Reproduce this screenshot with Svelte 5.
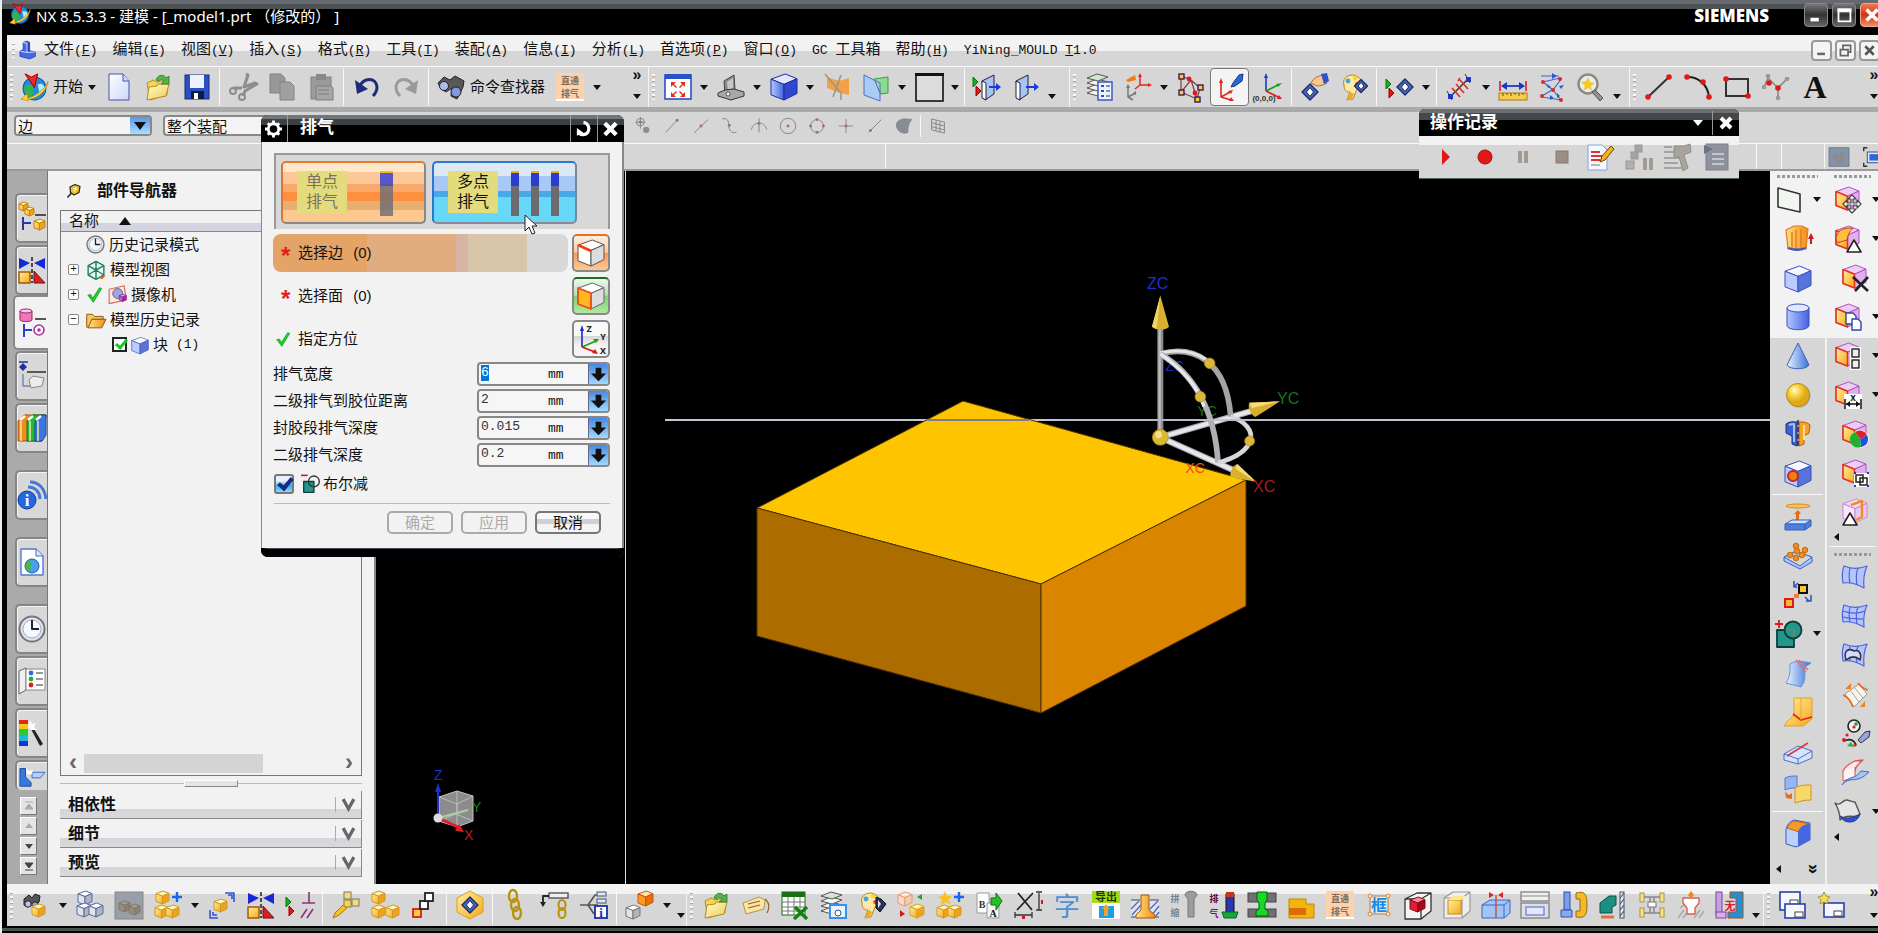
<script>
  import { onMount } from 'svelte';

  const p = (d, f = 'none', s = 'none', w = 1) =>
    `<path d="${d}" fill="${f}" stroke="${s}" stroke-width="${w}" stroke-linejoin="round"/>`;
  const c = (x, y, r, f = 'none', s = 'none', w = 1) =>
    `<circle cx="${x}" cy="${y}" r="${r}" fill="${f}" stroke="${s}" stroke-width="${w}"/>`;
  const r = (x, y, w, h, f = 'none', s = 'none', sw = 1) =>
    `<rect x="${x}" y="${y}" width="${w}" height="${h}" fill="${f}" stroke="${s}" stroke-width="${sw}"/>`;
  const t = (x, y, size, str, fill, weight = 400, fam = 'Noto Sans CJK SC') =>
    `<text x="${x}" y="${y}" font-size="${size}" fill="${fill}" font-weight="${weight}" font-family="${fam}, sans-serif" text-anchor="middle">${str}</text>`;
  const cube = (x, y, s, k, st) => {
    const a = (u, v) => `${x + u * s} ${y + v * s}`;
    return (
      p(`M${a(0, 0.2)}L${a(0.55, 0)}L${a(1, 0.18)}L${a(0.5, 0.4)}Z`, k[0], st, 1) +
      p(`M${a(0, 0.2)}L${a(0.5, 0.4)}V${y + s}L${a(0, 0.8)}Z`, k[1], st, 1) +
      p(`M${a(0.5, 0.4)}L${a(1, 0.18)}V${y + 0.75 * s}L${a(0.5, 1)}Z`, k[2], st, 1)
    );
  };
  const BL = ['#dfe8ff', 'url(#gb)', '#3048d0'];
  const LB = ['#f4f8ff', '#b9ccff', '#5674dc'];
  const YE = ['#fff6b0', 'url(#gy)', '#f0a21c'];
  const GR = ['#ffffff', '#e4e4ea', '#b4b4bc'];
  const OR = ['#ffe0b0', '#ff9a20', '#e86c10'];
  const sync = (x = 2, y = 1) =>
    cube(x, y, 23, ['#eccef5', '#ffa81c', '#e0b0ec'], '#b050c8') +
    p(`M${x} ${y + 4.6}L${x + 11.5} ${y + 9.2}V${y + 23}L${x} ${y + 18.4}Z`, 'url(#gy)', '#e83020', 1.6);
  const gem = (x, y, s) =>
    p(`M${x} ${y - s}L${x + s} ${y}L${x} ${y + s}L${x - s} ${y}Z`, '#4a68b8', '#1c2c70', 1.4) +
    p(`M${x} ${y - s * 0.55}L${x + s * 0.45} ${y}L${x} ${y + s * 0.55}L${x - s * 0.45} ${y}Z`, '#fff', '#16256a', 1);
  const arrows = (x, y) => p(`M${x} ${y}l5 5l-5 5z`, '#18b018', '#0a700a') + p(`M${x + 3} ${y + 9}l5 5l-5 5z`, '#e01818', '#900');
  const plus = (x, y, k = '#1668e8') => p(`M${x} ${y - 5}V${y + 5}M${x - 5} ${y}H${x + 5}`, 'none', k, 2.4);
  const nx =
    c(14, 15, 11, '#1d8fe0', '#0b57a8') +
    p('M5 12c5-3 9 2 8 6s-3 5-5 5c-4-4-5-8-3-11z', '#35b24a') +
    p('M17 11c4-2 7 1 7 5l-5 4z', '#bfe8ff') +
    p('M1 25c10 3 25-5 26-17c-1 6-14 18-26 17z', '#ffe14a', '#c58a00', 0.8) +
    p('M1 25l6-5l1 7z', '#ffd23a', '#c58a00', 0.6) +
    p('M5 1l6 3l6-3l-3 13z', '#f0282c', '#a00');
  const sheetY = (x, y) => cube(x, y, 13, YE, '#d09820');
  const folder =
    p('M3 10l6-3l4 2l10-2v15l-17 5z', '#f4d65a', '#b48c1c') +
    p('M3 27l2-13l8-1l1-2h11l-3 12z', 'url(#gf)', '#b48c1c') +
    p('M12 7c2-6 8-6 10-2l3-2v8h-8l3-3c-2-2-4-1-5 0z', '#58b04c', '#2c7a28', 0.8);
  const binoc = p('M2 8l5-4l3 3l3-4l5 2l-1 6l-4 4l-3-3l-4 4l-4-2z', '#555', '#222') + c(6, 13, 3.2, '#b9c8e4', '#222') + c(13, 14, 3.2, '#8fa6d8', '#222');
  const duct = r(0, 0, 28, 28, '#fbd2ac') + r(0, 26, 28, 2, '#fff') + t(14, 11, 9, '直通', '#7d6a5c', 700) + t(14, 24, 9, '排气', '#7d6a5c', 700);
  const mirror = p('M1 2l11 5l-11 6zM27 2l-11 5l11 6z', '#1828d8') + p('M14 1v26', 'none', '#111', 1.4).replace('/>', ' stroke-dasharray="4 2"/>') + r(1, 16, 11, 11, 'url(#gy)', '#a05000', 1.4) + p('M16 27v-12l11 12z', '#e01c20', '#701010');
  const layers = [17, 12, 7, 2].map((y) => p(`M2 ${y + 3}l10-4l11 3l-10 4z`, y === 2 ? '#cfe8cf' : '#f4f4f4', '#555')).join('');
  const face = p('M4 12c-3-8 8-13 14-8c6 4 3 10-1 12l-4 10l-6 1l3-8c-4 0-6-2-6-7z', '#ffe7a4', '#b88620') + c(8, 8, 2.4, '#38a8e8') + c(15, 5, 2.2, '#f8d818') + c(17, 11, 2, '#f05020') + p('M7 27l4-8l3 2l-3 6z', '#f4a820');
  const skin = (extra) => p('M3 2c7 3 15 3 23 0c-3 7-4 13-3 22c-7-4-14-6-21-5c-1-6-1-12 1-17z', '#b4c4ff', '#4c64d8', 1.2) + p('M9 4c-1 5-1 11 0 15M17 4c-2 5-2 11-1 17', 'none', '#4c64d8', 1.2) + extra;
  const trans = p('M2 10h17v17H2z', '#20988c', '#103c38', 1.8) + c(18, 10, 8.5, '#20988c', '#103c38', 1.8) + p('M12 10h7v7', 'none', '#b07050', 1.2);
  const gl = (d, extra = '') => p(d, 'none', '#868686', 1.5) + extra;
  const dot = (x, y) => c(x, y, 2.2, '#a86c64');
  const screen = (x, y) => r(x, y, 20, 14, '#f4f7ff', '#2840a8', 1.6) + r(x + 10, y + 8, 8, 5, '#fff', '#444');

  const icons = {
    nx,
    app: p('M8 2l6-2l4 2v13l9 2v7l-9 4l-15-4v-8l5-3z', '#4468e8', '#1830a0') + p('M14 4l4-2v13l-4 3z', '#2440c0') + p('M8 2l6 2v14l-10-2M14 18l12-1', 'none', '#c8d6ff', 1.6),
    new: p('M4 1h14l6 7v19H4z', 'url(#gw)', '#4054a8') + p('M18 1v7h6', '#cfdaf8', '#4054a8'),
    open: folder,
    save: r(2, 2, 24, 24, '#2c50c4', '#142c80') + r(7, 2, 14, 13, '#eef2ff') + r(8, 18, 13, 8, '#111a40') + r(11, 20, 4, 6, '#fff'),
    cut: p('M17 1l2 1l-4 12l11-4l2 1l-12 7l-2 5M13 15L4 15', 'none', '#8d8d8d', 3) + c(4, 18, 3, 'none', '#8d8d8d', 2) + c(13, 24, 3, 'none', '#8d8d8d', 2),
    copy: p('M2 1h11l4 4v15H2z', '#979797', '#828282') + p('M12 9h10l4 4v14H12z', '#a0a0a0', '#828282'),
    paste: r(4, 4, 20, 22, '#9b9b9b', '#808080') + r(9, 1, 10, 6, '#888') + p('M9 13h15l2 2v12H9z', '#a6a6a6', '#7c7c7c') + p('M11 17h11M11 21h11', 'none', '#7c7c7c'),
    undo: p('M6 14c5-10 17-10 18 0c0 4-1 6-4 9', 'none', '#1c2c78', 3) + p('M2 7l2 14l11-5z', '#1c2c78'),
    redo: p('M22 14c-5-10-17-10-18 0c0 4 1 6 4 9', 'none', '#9a9a9a', 3) + p('M26 7l-2 14l-11-5z', '#9a9a9a'),
    finder: p('M1 10l6-6l6 3l5-4l9 5l-1 6l-6 12l-6-3l1-8l-6 4l-5-3z', '#585858', '#222') + c(7, 13, 4.5, '#a9bde8', '#222') + c(19, 19, 5, '#7f9ae0', '#222'),
    duct,
    fit: r(1, 2, 26, 24, '#fff', '#2850c8', 1.6) + r(1, 1, 26, 5, '#2850c8') + p('M7 9h5l-2 2l3 3l-1 1l-3-3l-2 2zM21 9h-5l2 2l-3 3l1 1l3-3l2 2zM7 24h5l-2-2l3-3l-1-1l-3 3l-2-2zM21 24h-5l2-2l-3-3l1-1l3 3l2-2z', '#e03018'),
    laptop: p('M7 8l10-6l1 15l-10 4z', '#8e8e8e', '#444') + p('M10 9l6-4v10l-5 2z', '#c8c8c8') + p('M1 20l7-3l9-1l10 3v4l-13 4l-13-4z', '#a8a8a8', '#333') + c(11, 21, 2, '#fff', '#555'),
    cube: cube(1, 1, 26, BL, '#1c2c98'),
    clip: p('M4 4l12 4l10-3v17l-9-2l-13-5z', '#f4a048') + p('M2 1l16 19v7M18 2l-8 22', 'none', '#9c9888', 1.6),
    section: p('M12 6l14-2v16l-8 1z', '#8cdc90', '#3c9848') + p('M2 2l16 8v18L2 22z', '#a8ccf4', '#4c70c0') + p('M13 8l5 12', 'none', '#568'),
    window: r(1, 1, 27, 27, '#dcdcdc', '#111', 1.6) + r(0, 0, 29, 3, '#111'),
    exitin: arrows(0, 4) + p('M9 8l12-6v19l-9 6z', '#a8c4f4', '#223') + p('M9 8l4 2v17l-4-2z', '#fff', '#223') + p('M16 13h7v-3l5 4l-5 4v-3h-7z', '#1838e0'),
    exitout: p('M4 8l12-6v19l-9 6z', '#a8c4f4', '#223') + p('M4 8l4 2v17l-4-2z', '#fff', '#223') + p('M14 13h8v-3l5 4l-5 4v-3h-8z', '#1838e0'),
    layers: layers + r(13, 9, 14, 18, '#eef4ff', '#2c50c8', 1.4) + p('M16 13h3M16 18h3M16 23h3', 'none', '#2c50c8', 2) + p('M21 13h4M21 18h4M21 23h4', 'none', '#333'),
    wcs: p('M2 7l9-5l1 5l-8 2z', '#f47c18') + p('M16 3v9l-5 4M16 12h9', 'none', '#e02818', 1.5) + p('M16 0l2 4h-4zM28 12l-4 2v-4z', '#e02818') + p('M4 13v11l5 3M4 24l8-4', 'none', '#777', 1.5) + p('M4 11l2 4H2zM12 18l0 4l-3-2z', '#777'),
    graph: p('M4 3l10 4l9 8l-3 11L4 19zM4 3v16l10-12l6 19', 'none', '#804848', 1.3) + [[4, 3], [23, 14], [20, 26], [4, 19]].map(([x, y]) => r(x - 2, y - 2, 5, 5, '#f8c838', '#401858', 1.4)).join('') + c(12, 6, 2.4, '#e01818') + c(18, 20, 2.4, '#e01818'),
    datum: p('M5 8v16l10 3M5 24l9-5', 'none', '#e02818', 1.6) + p('M5 5l2 5H3zM17 17l-2 4l-3-3zM18 28l-5 0l2-4z', '#e02818') + p('M27 1l-1 7l-7 5l-4 1l2-4l6-8z', '#2c68d0', '#143480'),
    csys: p('M11 3v15', 'none', '#1838d8', 1.6) + p('M11 18l12-6', 'none', '#18a018', 1.6) + p('M11 18l12 6', 'none', '#e01818', 1.6) + p('M11 0l2 5H9z', '#1838d8') + p('M27 10l-4 4l-2-3z', '#18a018') + p('M27 26l-5 0l2-4z', '#e01818') + t(9, 28, 8, '(0,0,0)', '#333', 700, 'Liberation Sans'),
    hand: gem(9, 19, 8) + p('M10 10c3-6 8-7 12-8l4 8c-4 2-6 3-10 3z', '#f4c890', '#a86c30') + p('M20 1l6-1l2 8l-5 3z', '#2c50d0'),
    palette: face + gem(21, 13, 6.5),
    play: arrows(0, 6) + gem(19, 14, 8),
    dist: p('M4 24L22 6', 'none', '#333', 1.4) + p('M6 15l8 9M10 11l8 9M14 7l8 9M12 8l2-3', 'none', '#e02828', 1.6) + r(2, 21, 5, 5, '#1838e0') + r(20, 4, 5, 5, '#1838e0') + p('M1 18l5 9M19 1l5 9', 'none', '#333'),
    measure: p('M1 8v10M27 8v10', 'none', '#e01818', 1.6) + p('M3 13h22', 'none', '#1838c8', 1.8) + p('M2 13l6-4v8zM26 13l-6-4v8z', '#1838c8') + r(0, 20, 28, 7, '#f8cc48', '#a87c10') + p('M4 20v3M8 20v2M12 20v3M16 20v2M20 20v3M24 20v2', 'none', '#705008'),
    mesh: p('M3 3h18M5 9l17-4M5 9l10 8l9-12M14 17L4 23M15 17l8 10l-19-3', 'none', '#3c64d8', 1.2) + [[5, 9], [22, 6], [15, 17], [4, 23], [23, 27]].map(([x, y]) => c(x, y, 2, '#e02828')).join('') + p('M14 0l5 3l-5 3zM9 11l1 4l3-1zM26 12l-5 1l2 3zM19 20l0 5l3-2zM12 22l4 3l-4 2z', '#2c58d8'),
    lens: c(11, 11, 9.5, '#e8eef0', '#8a8a80', 2.4) + p('M11 4l2 5l5 1l-4 3l1 5l-4-3l-5 3l2-5l-4-4l5-1z', '#f8c828') + p('M18 17l8 8l-3 3l-8-9z', '#90908c', '#555'),
    line: p('M3 24L24 4', 'none', '#333', 2) + c(3, 24, 2.8, '#e01818') + c(24, 4, 2.8, '#e01818'),
    arc: p('M2 4c12-1 22 8 23 20', 'none', '#222', 2) + c(3, 4, 2.8, '#e01818') + c(19, 9, 2.8, '#e01818') + c(25, 24, 2.8, '#e01818'),
    rect: r(3, 6, 22, 17, 'none', '#333', 2) + c(3, 6, 2.8, '#e01818') + c(25, 23, 2.8, '#e01818'),
    nodes: p('M2 14l4-9l10 10l9-9M16 15v10', 'none', '#888', 1.6) + [[2, 14], [6, 3], [25, 6], [16, 25]].map(([x, y]) => c(x, y, 2.3, '#999')).join('') + c(7, 10, 2.8, '#e01818') + c(16, 15, 2.8, '#e01818'),
    A: t(14, 25, 32, 'A', '#111', 700, 'Liberation Serif'),

    s0: gl('M4 8a6 6 0 1 0 12 0a6 6 0 1 0-12 0M10 0v18M2 8h16') + c(19, 20, 5, '#8e8e8e') + dot(10, 8),
    s1: gl('M4 24L22 5', dot(22, 5)),
    s2: gl('M3 25L25 4', dot(14, 14)),
    s3: gl('M2 3c8-2 10 3 10 10s4 13 12 11', dot(13, 13)),
    s4: gl('M2 20c3-14 21-14 24 0M14 2v22', dot(14, 10)),
    s5: gl('M2 14a12 12 0 1 0 24 0a12 12 0 1 0-24 0', dot(14, 14)),
    s6: gl('M4 14a10 10 0 1 0 20 0a10 10 0 1 0-20 0', dot(14, 4) + dot(14, 24) + dot(4, 14) + dot(24, 14)),
    s7: gl('M14 3v22M3 14h22', dot(14, 14)),
    s8: gl('M4 24L24 4', dot(7, 21)),
    s9: p('M2 12c2-10 13-10 24-8c-5 6-6 11-6 20c-8 4-18-3-18-12z', '#888c98', '#777'),
    s10: gl('M4 3l20 5v17l-20-5zM4 9l20 5M4 15l20 5M11 5v17M17 7v17'),

    play1: p('M10 6l8 8l-8 8z', '#e01818'),
    rec: c(14, 14, 7, '#e01818', '#b00808'),
    pause: r(9, 8, 4, 12, '#a39a92') + r(15, 8, 4, 12, '#a39a92'),
    stop: r(8, 8, 12, 12, '#9c8e84', '#877a70'),
    edit: p('M2 2h14l5 5v20H2z', '#f4f8ff', '#88a0e0') + p('M5 9h9M5 13h11M5 17h9', 'none', '#e03030', 2) + p('M5 22h9', 'none', '#777') + p('M25 3l3 3l-9 11l-5 2l2-6z', '#f4b020', '#6c4808'),
    step: r(1, 18, 8, 8, '#b4b0a8', '#999') + r(6, 9, 7, 7, '#a4a4a4', '#999') + r(10, 2, 7, 7, '#a4a4a4', '#999') + r(18, 15, 4, 12, '#a39a92') + r(24, 15, 4, 12, '#a39a92'),
    gun: p('M1 4h8M1 9h12M1 15h16M1 20h14M1 25h18', 'none', '#a4a4a4', 1.8) + p('M11 3h10l6-2l1 8l-7 3l4 13l-5 3l-4-14h-5z', '#a8a39d', '#938e88'),
    log: r(4, 1, 22, 26, '#8e929e', '#7c808c') + p('M2 2l9 4l-9 5z', '#6c7284') + p('M10 11h12M10 16h12M10 21h12', 'none', '#c4c6cc', 2),

    plane: p('M3 2l22 6v18L3 21z', '#f2f6f0', '#333', 1.6),
    extrude: p('M2 5l8-4h8l6 3l-2 20H4z', 'url(#go)', '#e87818', 1.2) + p('M8 7v17M12 5v19M17 4v20', 'none', '#e87818', 1.4) + p('M3 23c5 4 15 4 20 0l-2-1c-5 2-11 2-16 0z', '#3c58c8') + p('M27 19v-6', 'none', '#d01818', 2) + p('M27 8l3 6h-6z', '#d01818'),
    block: cube(1, 2, 26, LB, '#3c50b8'),
    cyl: p('M3 5v18c2 5 20 5 22 0V5z', 'url(#gb)', '#3c50b8') + '<ellipse cx="14" cy="5" rx="11" ry="4" fill="#e0e8ff" stroke="#3c50b8"/>',
    cone: p('M14 1L3 23c3 5 19 5 22 0z', 'url(#gc)', '#3c60b8'),
    sphere: c(15, 15, 11.5, '#aaa') + c(14, 14, 11.5, 'url(#gs)', '#b88c10'),
    revolve: p('M2 4c4-3 8-2 11-2v24l-5-2v-8l-6-3z', '#3c60d0', '#1c3080') + p('M5 5c2-1 3-1 5-1v18', 'none', '#a4bcf8', 2) + p('M15 2c5 0 8 0 11 3l-1 8l-5 3v8l-5 2z', '#f8a028', '#b85c08') + p('M20 5v15', 'none', '#ffe090', 2) + p('M14 0v28', 'none', '#222', 1.4).replace('/>', ' stroke-dasharray="5 2"/>'),
    hole: cube(1, 2, 26, LB, '#3c50b8') + c(9, 17, 5, '#f08018', '#c82818', 2),
    boss: '<ellipse cx="14" cy="3" rx="12" ry="2" fill="#ffc058" stroke="#e08820"/>' + p('M14 7l3 4h-2v6h-3v-6h-2z', '#e86c10') + p('M1 21l7-4h19l-6 4z', '#d0e4ff', '#3c60c0') + p('M1 21h20v6H1zM21 21l6-4v6l-6 4z', '#4c80e0', '#3c60c0'),
    pattern: p('M0 15l12-6l16 6l-12 9zM0 15v4l16 8l12-7v-5', '#a8c8f8', '#3c5cc8') + [[6, 13], [13, 9], [12, 4], [18, 13], [21, 8], [12, 16]].map(([x, y]) => c(x, y, 2.8, '#f08c20', '#c86810')).join(''),
    assoc: r(1, 18, 8, 8, '#f8b830', '#e01818', 2) + r(15, 4, 8, 8, '#f8c830', '#111', 2) + r(10, 13, 5, 4, '#f08030') + p('M10 0l0 6l4-4M13 7l-3-3M27 14l0 6l-5 0M25 20l-4-4', 'none', '#3050c0', 1.6),
    unite: trans + p('M0 4h8M4 0v8', 'none', '#e01818', 1.8),
    trim: p('M6 5c6-4 12-3 21-1l-6 4c-1 8 2 12-4 20l-15-4c4-6 4-12 4-19z', 'url(#gc)', '#6890dc') + p('M12 1l10 12M15 1l9 10', 'none', '#d87070', 1.2),
    draft: p('M10 0h18v21l-9 7H0c3-5 7-8 10-11z', 'url(#gy)', '#e0a030') + p('M9 16l8 6l11-3', 'none', '#e02020', 1.6) + p('M17 22v-22', 'none', '#e8a830'),
    split: p('M0 17l14-8l14 5v7l-14 6L0 23z', '#d4e4fc', '#4c6cc8') + p('M0 17l14 5l14-8M14 22v5', 'none', '#4c6cc8') + p('M3 19L24 6', 'none', '#d83838', 1.6),
    replace: p('M1 2c4-2 8-2 12-2v12c-4 0-8 0-12 2z', '#98b4f4', '#5c78c8') + p('M11 12c5-3 10-3 16-3v15c-6 0-10 1-16 3z', '#f8d868', '#d09020') + p('M1 16l4 3l3-2v6l-6-1z', '#e07020'),
    blend: p('M2 9c2-6 5-8 8-9l16 3v17l-14 7l-10-3z', '#bcd0fc', '#3c58b8') + p('M3 8c2-4 4-6 8-7l14 3c-6 1-9 5-10 8z', '#f89828', '#c86808') + p('M14 12c1-4 5-8 12-8v16l-12 7z', '#4468e0'),

    sMove: sync() + p('M18 9l4 4h-3v4h4v-3l4 4l-4 4v-3h-4v4h3l-4 4l-4-4h3v-4h-4v3l-4-4l4-4v3h4v-4h-3z', '#fff', '#444', 1.2),
    sPull: sync() + p('M2 13C4 3 12 3 19 3c-3 3-5 6-6 12L3 18z', '#f8c040', '#d03818') + p('M20 15l7 12H13z', '#fff', '#222', 1.6),
    sDel: sync() + p('M12 13l15 14M27 13L14 27', 'none', '#222', 2.6),
    sCopy: sync() + p('M12 10h7l3 3v8H12z', '#fff', '#2848a8', 1.4) + p('M18 16h6l3 3v8h-9z', '#fff', '#2848a8', 1.4),
    sGroup: sync() + r(16, 5, 11, 23, '#fff') + r(18, 7, 7, 8, '#eee', '#222', 1.4) + r(18, 18, 7, 8, '#eee', '#222', 1.4),
    sDim: sync() + r(10, 13, 18, 15, '#fff') + p('M11 18v10M27 18v10M12 23h14', 'none', '#111', 1.5) + p('M12 23l4-3v6zM26 23l-4-3v6z', '#111') + t(19, 20, 10, 'x', '#111', 700, 'Liberation Sans'),
    sColor: sync() + c(19, 19, 9, '#fff') + p('M19 19L14 12a8 8 0 0 1 12 3z', '#e02020') + p('M19 19l7-4a8 8 0 0 1-6 12z', '#2050e0') + p('M19 19l1 8a8 8 0 0 1-6-15z', '#20b030'),
    sEdit: sync() + r(13, 14, 15, 14, '#fff') + r(15, 16, 7, 7, 'none', '#222', 1.5) + r(19, 19, 7, 7, 'none', '#222', 1.5) + r(13, 13, 2, 2, '#1838e0') + r(26, 13, 2, 2, '#1838e0') + r(13, 26, 2, 2, '#1838e0') + r(26, 26, 2, 2, '#1838e0'),
    sOffset: cube(2, 1, 24, ['#f2dcf6', '#f6e6fa', '#ecc8f2'], '#c888d8') + p('M10 7l11-4v16l-6 3', 'none', '#f08c20', 2.4) + p('M9 15l7 12H2z', '#fff', '#222', 1.6),
    sk1: skin(''),
    sk2: skin(p('M2 8c8 3 15 3 22 0M2 14c8 2 14 2 21 2', 'none', '#4c64d8', 1.2)),
    sk3: skin(p('M5 18c-3-10 3-12 8-9c5-2 8 3 6 9c-4-4-9-4-14 0z', '#d4dcff', '#333', 1.5)),
    sk4: p('M4 13l14-10l8 10L13 26z', '#f8f4ec', '#999') + p('M9 9l9 12M13 6l9 11', 'none', '#aaa') + p('M2 14c5 2 8 6 10 12M17 2c3 4 6 6 10 7', 'none', '#e86820', 1.8) + p('M4 8l6-6v6zM19 26l5-6v6z', '#f08020'),
    sk5: c(13, 6, 6, '#eef4ee', '#222', 1.6) + c(15, 4, 1.8, '#18a030') + c(13, 7, 1.6, '#d82020') + p('M3 21c6-3 10-1 12 4', 'none', '#222', 1.8) + c(3, 20, 2, '#d82020') + c(6, 15, 1.6, '#d82020') + c(14, 25, 1.6, '#d82020') + p('M6 26l4-4l3 5z', '#28b040') + p('M17 20l7-8l5-1l-1 6l-8 6z', '#98a4e0', '#333'),
    sk6: p('M2 12c3-6 8-8 12-10l8-1c-4 4-8 6-8 11z', '#fbe8e8', '#d85858', 1.3) + p('M2 12v10l12-4V8', '#f8f4f4', '#d85858') + p('M1 26c8-10 14 0 27-13l-8-1c-6 9-12 4-19 14z', '#a8c4f8', '#4464c0'),
    sk7: p('M1 5c6 4 8-4 12-3s6 2 8 2l5 12c-6 6-12-2-20 6c0-6-2-12-5-17z', '#e4e4e4', '#555', 1.4) + p('M6 18c5 3 12 3 20-2c-2 6-6 8-10 8s-7-1-10-6z', '#3050d8', '#223888'),

    bFind: binoc + sheetY(10, 13),
    bAsm: cube(2, 0, 14, GR, '#5468a8') + cube(1, 12, 14, GR, '#5468a8') + cube(13, 12, 14, GR, '#5468a8'),
    bDim: r(0, 1, 28, 27, '#9a9ea6', '#84888e') + cube(4, 10, 11, ['#a89c8c', '#988c7c', '#8c8070'], '#80786c') + cube(14, 13, 11, ['#a89c8c', '#988c7c', '#8c8070'], '#80786c'),
    bAdd: sheetY(2, 0) + sheetY(1, 14) + sheetY(12, 14) + plus(23, 6),
    bMove: sheetY(6, 8) + p('M17 2h9v9M20 4h4v4M2 19v8h8M5 21v3h4', 'none', '#3454d0', 1.6),
    bMirror: mirror,
    bCons: arrows(0, 6) + p('M23 1v11M16 12h13M15 27l6-9M21 27l6-9', 'none', '#903078', 1.6),
    bLink: r(12, 1, 7, 7, '#f4dc78', '#777') + r(12, 9, 7, 7, '#f8d840', '#777') + r(20, 8, 7, 7, '#f4dc78', '#777') + p('M1 27l2-5l8-8l4 3l-8 7z', '#f8c020', '#a87810'),
    bTri: sheetY(1, 0) + sheetY(1, 14) + sheetY(15, 14),
    bSteps: r(3, 18, 8, 8, '#f8d048', '#e01818', 1.8) + r(10, 10, 8, 8, '#fff', '#222', 1.8) + r(15, 2, 8, 8, '#fff', '#222', 1.8),
    bGem: p('M14 0l13 7v14l-13 7l-13-7V7z', 'url(#gy)', '#d8a018') + gem(14, 14, 8),
    chain: [5, 14, 22].map((y, i) => `<ellipse cx="${11 + i * 2}" cy="${y}" rx="4" ry="6" fill="none" stroke="#b89410" stroke-width="2.4"/>`).join(''),
    chain2: r(8, 2, 19, 5, '#eee', '#555', 1.4) + p('M8 5H2v8', 'none', '#222', 1.8) + p('M2 16l-3-5h6z', '#222') + [14, 22].map((y) => `<ellipse cx="21" cy="${y}" rx="3.5" ry="5" fill="none" stroke="#b89410" stroke-width="2.2"/>`).join(''),
    treeInfo: p('M0 14h8M8 14L15 4h3M8 14h10M8 14l6 9', 'none', '#555', 1.6) + r(17, 1, 9, 4, '#dce8ff', '#456') + r(17, 8, 9, 4, '#dce8ff', '#456') + r(15, 15, 12, 12, '#fff', '#1c30a0', 1.8) + t(21, 26, 13, 'i', '#1c30a0', 700, 'Liberation Serif'),
    bWave: cube(12, 0, 15, OR, '#c85808') + cube(0, 14, 14, GR, '#777'),
    tag: p('M2 12l16-6l6 3l-1 9l-18 5z', '#fbe4a4', '#b89048') + p('M7 13l12-3M7 17l12-3M24 8c5 4 4 10 2 14', 'none', '#8c6428', 1.2),
    sheet: r(2, 1, 23, 23, '#fff', '#177017') + r(2, 1, 23, 5, '#177017') + p('M2 11h23M2 16h23M2 20h23M8 6v18M14 6v18M20 6v18', 'none', '#777') + p('M15 16l12 12M27 16L14 28', 'none', '#158015', 3.4),
    layerS: layers + r(11, 14, 16, 13, '#e8f4ff', '#3890e8', 2) + c(19, 22, 3, '#fff', '#357'),
    paletteB: face + p('M18 6l5 2l5 5l-6 8l-4-4z', '#28345c', '#111') + p('M20 9l3 4l-3 4z', '#dde'),
    swap: cube(1, 1, 14, ['#fbe8dc', '#f8dcc8', '#f4ccb0'], '#e89878') + cube(13, 13, 14, YE, '#e0a020') + p('M25 3v6l-5-3z', '#28a030') + p('M3 19v7l5-3z', '#d81818'),
    addStar: sheetY(1, 14) + sheetY(12, 14) + p('M9 0l2 5l5 0l-4 4l3 5l-5-3l-5 3l1-5l-4-3l5-1z', '#f8c020') + plus(23, 6),
    page: p('M2 2h12v20H2z', '#fff', '#999') + p('M12 12h12v15H12z', '#f4f4f4', '#999') + p('M16 7h5v-5l6 8l-6 9v-5h-5z', '#28c028', '#107010') + t(18, 26, 10, 'A', '#111', 700, 'Liberation Serif') + t(7, 17, 10, 'B', '#333', 700, 'Liberation Serif'),
    dimX: p('M4 2l14 17M19 2L3 19', 'none', '#222', 1.8) + p('M25 2v17M22 1h6M22 19h6M1 24h17M1 21v6M18 21v6', 'none', '#333', 1.3) + r(8, 25, 3, 3, '#c02020') + r(27, 9, 2, 4, '#c02020'),
    zi: t(14, 25, 26, '字', '#4c90d8'),
    out: r(0, 0, 28, 28, '#fff') + r(0, 0, 28, 12, '#a4dc14') + t(14, 10, 11, '导出', '#1c3c08', 700) + r(7, 15, 15, 12, '#18a0e8') + p('M14 13l4 5h-2v7h-4v-7h-2z', '#f4a028'),
    weld: p('M0 9h28v17H0z', '#dce4f4') + p('M0 9h9M19 9h9M0 26h28', 'none', '#445') + p('M0 18l8-8M1 24l9-10M19 18l8-8M20 25l8-10M25 25l3-4', 'none', '#5468b0', 1.3) + p('M10 4h8v15l6 5v3H5v-3l5-5z', 'url(#go)', '#a05808'),
    screw: p('M15 4c0-5 12-5 12 0l-3 4v18h-6V8z', '#9c9ca0', '#777') + t(5, 11, 9, '拼', '#6c8498', 700) + t(5, 25, 9, '缩', '#6c8498', 700),
    pin: t(5, 11, 9, '排', '#500838', 700) + t(5, 26, 9, '气', '#800878', 700) + r(17, 3, 8, 20, '#2838b0', '#111') + r(17, 1, 8, 5, '#c03818') + p('M13 21h16l-2 6H15z', '#18a830', '#064'),
    gIns: r(0, 2, 28, 9, '#707074', '#444') + r(0, 18, 28, 8, '#707074', '#444') + p('M9 1h10v8l-2 3v6l3 2v5H8v-5l3-2v-6l-2-3z', '#18d828', '#085c10'),
    step2: p('M2 8h17v5h8v14H2z', '#f4b410', '#c08800') + r(2, 17, 17, 7, '#dc6c08'),
    frame: p('M5 5h18v18H5z', '#d0ecff', '#e09858', 1.6) + [[5, 5], [23, 5], [5, 23], [23, 23]].map(([x, y]) => c(x, y, 2, '#fbe0b8', '#d88848')).join('') + t(14, 20, 16, '框', '#1c88e0', 700),
    redCube: p('M1 8l12-6h14v18l-10 8H1zM1 8h16v20M17 8l10-6', '#f4f4f4', '#333', 1.3) + cube(6, 6, 15, ['#ff88a0', '#e81838', '#a00818'], '#801020'),
    yelBox: p('M1 7l9-6h17v19l-8 7H1zM1 7h18v20M19 7l8-6', '#eee', '#999', 1.2) + r(5, 9, 13, 14, 'url(#gy)', '#c88c10') + p('M5 9l5-4h13l-5 4z', '#ffe890'),
    splitB: p('M0 14l8-5h20v13l-6 5H0z', '#a0c4f4', '#3c68c0') + p('M0 14h22v13M22 14l6-5', 'none', '#3c68c0') + p('M14 4v23', 'none', '#c84848', 1.4) + p('M7 1l5 3l-5 3zM21 1l-5 3l5 3z', '#e02020'),
    mold: r(0, 1, 28, 9, '#f0f0f0', '#888', 1.4) + r(0, 12, 28, 15, '#e0e0e4', '#888', 1.4) + p('M0 5h28', 'none', '#888') + r(5, 16, 18, 8, '#e4e8ff', '#7088d8', 1.4),
    bolt: r(4, 1, 6, 18, '#7c9cf0', '#3050a8') + p('M1 19h11v7H1z', '#88a8f0', '#3050a8') + p('M16 2c8-2 11 0 11 12s-3 13-11 12v-6h4V8h-4z', '#f4b828', '#98680c'),
    gecko: p('M1 22V12l9-7h7v9l-4 2v6z', '#1c9080', '#0c5048') + p('M2 26h13', 'none', '#e07038', 3) + r(21, 1, 4, 26, '#e4ecf4', '#456') + p('M21 7l4-5M21 13l4-5M21 19l4-5M21 25l4-5', 'none', '#456', 1.2),
    axle: r(2, 2, 4, 9, '#f8e488', '#a89440') + r(22, 2, 4, 9, '#f8e488', '#a89440') + r(2, 17, 4, 9, '#f8e488', '#a89440') + r(22, 17, 4, 9, '#f8e488', '#a89440') + p('M6 6h16M6 22h16M12 6v16M16 6v16', 'none', '#888', 1.5) + r(10, 11, 8, 5, '#fff', '#777'),
    inject: p('M1 27l6-8M6 27l6-8M17 27l6-8M22 27l5-7M3 17l5-4', 'none', '#aaa', 1.6) + p('M6 7h16v5l-4 5v6h-8v-6l-4-5z', '#fff', '#d86058', 1.4) + p('M14 0l3 4l-3 4l-3-4z', '#f08820'),
    wu: r(0, 1, 6, 22, '#c4a0e0', '#74a') + r(0, 21, 10, 6, '#d8b0e4', '#74a') + p('M14 1h13v26H12v-6h8V7h-6z', '#2090d8', '#a85020') + t(14, 19, 11, '无', '#d82030', 700),
    win1: screen(1, 1).replace('height="14"', 'height="18"') + screen(6, 13),
    win2: screen(6, 12) + p('M6 1l2 4l4 1l-3 3l1 4l-4-2l-4 2l1-4l-3-3l4-1z', '#f4dc58', '#9c8420', 0.8),

    tAsm: cube(1, -2, 9, YE, '#c08410') + cube(7, 3, 9, YE, '#c08410') + p('M17 11h11', 'none', '#222', 1.5) + p('M5 13v13M5 19h8', 'none', '#2838a0', 2) + cube(16, 15, 11, YE, '#c08410'),
    tMir: mirror,
    tPart: p('M2 2v9c1 2 11 2 12 0V2z', '#f078b8', '#a02070') + '<ellipse cx="8" cy="2" rx="6" ry="2" fill="#ffc8e4" stroke="#a02070"/>' + p('M17 10h11', 'none', '#222', 1.5) + p('M6 15v13M6 21h8', 'none', '#3040c0', 2) + c(21, 21, 5, '#fff', '#b030a0', 1.6) + c(21, 21, 1.8, '#b030a0'),
    tWave: p('M5 1l4 4l-4 4l-4-4z', '#1c30a0') + p('M1 0h9', 'none', '#1c30a0', 1.5) + p('M9 10h19', 'none', '#222', 1.4) + p('M5 12v12h7', 'none', '#7080c0', 1.4) + p('M11 18l4-4l11 2l-2 8l-11 2z', '#ececec', '#888'),
    tBooks: p('M0 7l6-6h22l-4 26H0z', '#f08c20', '#a85808') + p('M9 7l5-6h14l-4 26H9z', '#28b838', '#107020') + p('M17 7l5-6h6v20l-4 6h-7z', '#3878e0', '#1c4498') + p('M3 7v20M12 7v20M20 7v20', 'none', '#ffe8b0', 1.4) + p('M2 6l5-4M10 6l5-4M18 6l5-4', 'none', '#fff', 2.4),
    tInfo: c(9, 19, 9, '#2468e0', '#123c98') + t(9, 25, 17, 'i', '#fff', 700, 'Liberation Serif') + p('M10 6c8 0 12 6 12 12M12 1c10 0 15 8 16 17', 'none', '#4478d8', 3),
    tWeb: p('M3 1h15l7 7v19H3z', '#fff', '#5078d0', 1.4) + p('M18 1v7h7', '#dce8ff', '#3c68c8') + c(14, 18, 7, '#48a0e8', '#1c58a8') + p('M9 14c4-3 6 1 4 4s1 5-1 6c-4-1-6-6-3-10z', '#48b848'),
    clock: c(14, 14, 12.5, '#dce4f0', '#777', 2) + c(14, 14, 9, '#f4f8ff', '#aab') + p('M14 5v9h7', 'none', '#222', 2),
    tRole: p('M1 4l7-3v22l-7 4z', '#f0f0f0', '#666') + r(8, 2, 19, 21, '#fff', '#888') + c(13, 6, 2.4, '#3068e0') + c(13, 12, 2.4, '#28b028') + c(13, 18, 2.4, '#e02020') + p('M18 6h7M18 12h7M18 18h7', 'none', '#777', 1.4),
    tHd: r(1, 1, 9, 4, '#e02818') + r(1, 5, 9, 5, '#f8c818') + r(1, 10, 9, 7, '#28c838') + r(1, 17, 9, 5, '#20b8e0') + r(1, 22, 9, 5, '#1c30d8') + p('M13 10l3 0l9 15l-3 2z', '#222') + p('M12 1l2 4l4-1l-2 4l3 3l-6 0l-3-3z', '#fff'),
    tPr: p('M1 6h6v9l6 6v4H1z', '#3478e0', '#1c4898') + p('M14 10h14l-5 6h-9z', '#b8d0f8', '#3468c0') + p('M8 5l3 4l4-2l-1 5h-6z', '#fff'),
    views: p('M14 2l11 6v13l-11 6L3 21V8zM14 2v25M3 8l11 6l11-6M3 21l11-7l11 7', 'none', '#18885c', 2) + p('M17 25l11-4l-5 6z', '#f06020'),
    check: p('M3 15l5-1l3 6L22 3l4 1L12 27z', '#18d028', '#0a9018'),
    camera: p('M3 6l21-5l3 20l-24 5z', '#fde8e8', '#d86858', 1.6) + c(15, 12, 7, '#9aa8e0', '#446') + cube(17, 13, 10, ['#e8a0e8', '#d858d8', '#a828b8'], '#802090'),
    folder2: p('M1 6h8l3 3h12v4H9L4 24H1z', '#f8c860', '#8c5c10', 1.4) + p('M8 13h20l-6 12H3z', 'url(#go)', '#8c5c10', 1.4),
    pinI: p('M1 27l8-9', 'none', '#222', 3) + p('M6 6l10-5l10 4l-2 12l-10 5l-7-5z', '#f0c028', '#222', 2.4) + p('M12 8l8 3M18 6l-3 9', 'none', '#fff', 2),
    edgeB: cube(1, 1, 26, ['#fff', '#fff', '#dcdcdc'], '#555') + p('M1 6l13 6', 'none', '#f04010', 2.6),
    faceB: cube(1, 1, 26, ['#fff', '#ffb820', '#dcdcdc'], '#666') + p('M1 6l13 5v16L1 22z', 'none', '#f05010', 1.8),
    axesB: p('M5 5v17', 'none', '#1828d0', 1.6) + p('M5 22l14-6', 'none', '#18a018', 1.6) + p('M5 22l13 5', 'none', '#d81818', 1.6) + p('M5 0l2 6H3z', '#1828d0') + p('M22 14l-3 4l-3-4z', '#18a018') + p('M21 29l-6-1l3-4z', '#d81818') + t(12, 7, 9, 'Z', '#222', 700, 'Noto Sans') + t(26, 15, 9, 'Y', '#222', 700, 'Noto Sans') + t(26, 29, 9, 'X', '#222', 700, 'Noto Sans'),
    boolB: p('M4 11h15v16H4z', '#20988c', '#103c38', 2) + c(19, 11, 8, 'none', '#333', 2) + p('M0 2h10', 'none', '#e01818', 2.4),
    mini: r(0, 1, 28, 26, '#8494a8', '#667') + p('M6 8l6 4l8-6l3 12l-9 5l-8-4z', '#8c8c90'),
    mini2: p('M1 6V1h5M22 1h5v5M1 22v5h5', 'none', '#333', 2) + r(6, 7, 18, 15, '#dce8ff', '#456', 1.4) + r(9, 10, 12, 9, '#2c68d8')
  };

  const menus = [
    ['文件', 'F'], ['编辑', 'E'], ['视图', 'V'], ['插入', 'S'], ['格式', 'R'], ['工具', 'T'], ['装配', 'A'],
    ['信息', 'I'], ['分析', 'L'], ['首选项', 'P'], ['窗口', 'O'], ['工具箱', ''], ['帮助', 'H']
  ];
  const top1a = 'new open save | cut copy paste | undo redo |'.split(' ');
  const top2 = 'fit > laptop > cube > clip section > window > | exitin exitout v'.split(' ');
  const top3 = 'layers wcs > graph datum! csys | hand palette | play > | dist > measure mesh lens v'.split(' ');
  const top4 = 'line arc rect nodes A'.split(' ');
  const snaps = 's0 s1 s2 s3 s4 s5 s6 s7 s8 s9 | s10'.split(' ');
  const bot1 = 'bFind > bAsm bDim bAdd > bMove bMirror bCons | bLink bTri bSteps | bGem | chain chain2 treeInfo | bWave > v'.split(' ');
  const bot2 = 'open tag sheet layerS paletteB swap addStar page dimX zi out weld screw pin gIns step2 duct frame redCube yelBox splitB mold bolt gecko axle inject wu v'.split(' ');
  const bot3 = 'win1 win2'.split(' ');
  const side1 = 'plane> extrude block cyl cone sphere revolve hole | boss pattern assoc unite> trim draft split replace | blend'.split(' ');
  const side2 = 'sMove> sPull> sDel sCopy> sGroup> sDim> sColor sEdit sOffset'.split(' ');
  const side3 = 'sk1 sk2 sk3 sk4 sk5 sk6 sk7>'.split(' ');
  const recorder = 'play1 rec pause stop edit step gun log'.split(' ');
  const tabs = [
    ['tAsm', 0], ['tMir', 0], ['tPart', 0], ['tWave', 0], ['tBooks', 0], ['tInfo', 1], ['tWeb', 1], ['clock', 1], ['tRole', 0], ['tHd', 0]
  ];
  const fields = [
    ['width', '排气宽度', '6'], ['distance', '二级排气到胶位距离', '2'], ['seal', '封胶段排气深度', '0.015'], ['depth', '二级排气深度', '0.2']
  ];
  const sections = ['相依性', '细节', '预览'];

  let dialog;
  onMount(() => {
    const first = dialog.querySelector('#width');
    first.focus();
    first.select();
  });
</script>

{#snippet ico(name, size = 28)}
  <svg class="ico" width={size} height={size} viewBox="0 0 28 28" aria-hidden="true">{@html icons[name]}</svg>
{/snippet}

{#snippet bar(items)}
  {#each items as it}
    {#if it === '|'}
      <i class="sep"></i>
    {:else if it === '>'}
      <button class="drop" aria-label="更多"><i class="tri"></i></button>
    {:else if it === 'v'}
      <button class="drop low" aria-label="选项"><i class="tri"></i></button>
    {:else}
      <button class="cell" class:on={it.endsWith('!')} aria-label={it.replace('!', '')}>{@render ico(it.replace('!', ''))}</button>
    {/if}
  {/each}
{/snippet}

{#snippet vbar(items)}
  {#each items as it}
    {#if it === '|'}
      <i class="hsep"></i>
    {:else}
      <button class="vcell" aria-label={it.replace('>', '')}>
        {@render ico(it.replace('>', ''))}
        {#if it.endsWith('>')}<i class="tri"></i>{/if}
      </button>
    {/if}
  {/each}
{/snippet}

{#snippet more()}
  <button class="more" aria-label="工具栏选项"><b>»</b><i class="tri"></i></button>
{/snippet}

<svg width="0" height="0" class="defs" aria-hidden="true">
  <defs>
    <linearGradient id="gb"><stop offset="0" stop-color="#b4c8ff" /><stop offset="1" stop-color="#4460e0" /></linearGradient>
    <linearGradient id="gy" x2="1" y2="1"><stop offset="0" stop-color="#fff0a0" /><stop offset="1" stop-color="#f8a818" /></linearGradient>
    <linearGradient id="go"><stop offset="0" stop-color="#ffe080" /><stop offset="1" stop-color="#f08c18" /></linearGradient>
    <linearGradient id="gf" x2="1" y2="1"><stop offset="0" stop-color="#fffcd0" /><stop offset="1" stop-color="#f0cc50" /></linearGradient>
    <linearGradient id="gw" x2="1" y2="1"><stop offset="0" stop-color="#ffffff" /><stop offset="1" stop-color="#ccd8fa" /></linearGradient>
    <linearGradient id="gc"><stop offset="0" stop-color="#e8f4ff" /><stop offset="1" stop-color="#3870d8" /></linearGradient>
    <radialGradient id="gs" cx=".35" cy=".3"><stop offset="0" stop-color="#fffbe0" /><stop offset=".4" stop-color="#fbdc50" /><stop offset="1" stop-color="#e0a818" /></radialGradient>
  </defs>
</svg>

<div class="window">
  <header class="title">
    {@render ico('nx', 22)}
    <h1>NX 8.5.3.3 - 建模 - [_model1.prt （修改的） ]</h1>
    <strong>SIEMENS</strong>
    <div class="winbtns">
      <button aria-label="最小化"><svg viewBox="0 0 24 24"><path d="M6 15h9v4H6z" fill="#fff" /></svg></button>
      <button aria-label="最大化"><svg viewBox="0 0 24 24"><path d="M6 6h13v13H6z" fill="none" stroke="#fff" stroke-width="2" /><path d="M5 5h15v4H5z" fill="#fff" /></svg></button>
      <button class="close" aria-label="关闭"><svg viewBox="0 0 24 24"><path d="M6 6l12 12M18 6L6 18" stroke="#fff" stroke-width="4" /></svg></button>
    </div>
  </header>

  <nav class="menu">
    <i class="grip"></i>
    {@render ico('app', 18)}
    <ul>
      {#each menus as [name, key]}
        <li><a href="#menu">{#if !key}<span>GC&nbsp;</span>{/if}{name}{#if key}<span>(<u>{key}</u>)</span>{/if}</a></li>
      {/each}
      <li><a href="#menu"><span>YiNing_MOULD <u>T</u>1.0</span></a></li>
    </ul>
    <div class="mdi">
      <button aria-label="最小化"><svg viewBox="0 0 20 20"><path d="M5 14h9" stroke="#666" stroke-width="3" /></svg></button>
      <button aria-label="还原"><svg viewBox="0 0 20 20"><path d="M7 8V4h9v8h-3M4 9h9v7H4z" fill="none" stroke="#666" stroke-width="2" /></svg></button>
      <button aria-label="关闭"><svg viewBox="0 0 20 20"><path d="M5 5l10 10M15 5L5 15" stroke="#555" stroke-width="3" /></svg></button>
    </div>
  </nav>

  <div class="tools">
    <div class="group g1">
      <i class="grip"></i>
      <button class="start">{@render ico('nx', 29)}开始<i class="tri"></i></button>
      {@render bar(top1a)}
      <button class="find">{@render ico('finder')}命令查找器</button>
      {@render bar(['duct', '>'])}
      {@render more()}
    </div>
    <div class="group g2"><i class="grip"></i>{@render bar(top2)}</div>
    <div class="group g3"><i class="grip"></i>{@render bar(top3)}</div>
    <div class="group g4"><i class="grip"></i>{@render bar(top4)}{@render more()}</div>
  </div>

  <div class="select-row">
    <div class="combo"><select aria-label="类型过滤器"><option>边</option></select><i class="tri"></i></div>
    <div class="combo wide"><select aria-label="选择范围"><option>整个装配</option></select><i class="tri"></i></div>
    <div class="snaps">
      {#each snaps as s}
        {#if s === '|'}<i class="sep"></i>{:else}<button aria-label={s}>{@render ico(s, 18)}</button>{/if}
      {/each}
    </div>
  </div>
  <div class="cue">
    <i class="sep mid"></i>
    <div class="status"><i></i><i></i><i></i>{@render ico('mini', 20)}{@render ico('mini2', 20)}</div>
  </div>

  <main>
    <aside class="tabs">
      {#each tabs as [name, gap], i}
        <button class="tab" class:active={i === 2} class:gap={gap} aria-label={name}>{@render ico(name)}</button>
      {/each}
      <button class="tab part" aria-label="tPr">{@render ico('tPr', 26)}</button>
      <div class="pager">
        <button aria-label="第一个"><svg viewBox="0 0 16 16"><path d="M4 4h8M8 6l4 5H4z" stroke="#aaa" fill="#aaa" /></svg></button>
        <button aria-label="上一个"><svg viewBox="0 0 16 16"><path d="M8 5l4 5H4z" fill="#aaa" /></svg></button>
        <button aria-label="下一个"><svg viewBox="0 0 16 16"><path d="M8 11l4-5H4z" fill="#444" /></svg></button>
        <button aria-label="最后一个"><svg viewBox="0 0 16 16"><path d="M4 12h8M8 10l4-5H4z" stroke="#444" fill="#444" /></svg></button>
      </div>
    </aside>

    <section class="panel">
      <h2>{@render ico('pinI', 14)}部件导航器</h2>
      <div class="tree">
        <div class="head">名称<i></i></div>
        <ul>
          <li><i class="none"></i>{@render ico('clock', 19)}历史记录模式</li>
          <li><button class="exp" aria-label="展开">+</button>{@render ico('views', 20)}模型视图</li>
          <li><button class="exp" aria-label="展开">+</button>{@render ico('check', 17)}<span class="cam">{@render ico('camera', 20)}</span>摄像机</li>
          <li><button class="exp" aria-label="折叠">−</button>{@render ico('folder2', 20)}模型历史记录</li>
          <li class="child"><label><input type="checkbox" checked />{@render ico('block', 18)}块 <span>(1)</span></label></li>
        </ul>
        <div class="hscroll"><button aria-label="向左">‹</button><i></i><button aria-label="向右">›</button></div>
      </div>
      <div class="splitter"><i></i></div>
      {#each sections as s}
        <button class="section"><span>{s}</span><svg viewBox="0 0 14 14"><path d="M2 2l5 9l5-9" fill="none" stroke="#666" stroke-width="3" /></svg></button>
      {/each}
    </section>

    <section class="canvas">
      <svg viewBox="376 171 1394 713" preserveAspectRatio="xMidYMid slice" aria-label="图形窗口" role="img">
        <path d="M625.5 171v713" stroke="#ddd" />
        <path d="M665 420h1105" stroke="#c4c4d4" stroke-width="2" />
        <g stroke="#4a3200" stroke-width="1">
          <path d="M963 401L757 508L1041 584L1246 480Z" fill="#ffc400" />
          <path d="M757 508L1041 584V713L757 636Z" fill="#ad6c00" />
          <path d="M1041 584L1246 480V606L1041 713Z" fill="#da8500" />
        </g>
        <path d="M926 420h103" stroke="#7c7c98" stroke-width="2" />
        <g transform="translate(1060 250) scale(.3333)" fill="none">
          <g font-family="Liberation Sans, sans-serif" font-size="42">
            <text x="316" y="362" fill="#1830c0">ZC</text>
            <text x="412" y="498" fill="#107818">YC</text>
            <text x="376" y="670" fill="#e85020">XC</text>
          </g>
          <path d="M301 562V235" stroke="#8c8c90" stroke-width="18" />
          <path d="M299 562V235" stroke="#bcbcc0" stroke-width="7" />
          <path d="M301 562L575 483M301 562L530 665" stroke="#a8a8ac" stroke-width="19" />
          <path d="M301 562L575 483M301 562L530 665" stroke="#e8e8ec" stroke-width="12" />
          <path d="M301 312C400 285 500 330 512 500" stroke="#a4a4a8" stroke-width="17" />
          <path d="M301 308C360 296 405 305 440 330" stroke="#e4e4e8" stroke-width="9" />
          <path d="M301 312C400 370 465 480 474 638" stroke="#b0b0b4" stroke-width="17" />
          <path d="M301 312C370 360 415 410 432 470" stroke="#e8e8ec" stroke-width="10" />
          <path d="M512 500C605 530 590 610 474 638" stroke="#d8d8dc" stroke-width="14" />
          <path d="M0 510H840" stroke="#b8b8c8" stroke-width="4" />
          <path d="M301 137L276 230C284 242 318 242 327 230Z" fill="#d8b030" />
          <path d="M301 137L290 236L276 230Z" fill="#f0d468" />
          <path d="M660 454L568 458C562 472 572 494 586 501Z" fill="#d8b030" />
          <path d="M660 454L568 458L576 474Z" fill="#f4dc78" />
          <path d="M588 695L532 642C516 648 508 668 512 682Z" fill="#d8b030" />
          <path d="M588 695L532 642L526 656Z" fill="#f4dc78" />
          <g fill="#dcb838" stroke="#a88018" stroke-width="2">
            <circle cx="301" cy="562" r="24" /><circle cx="449" cy="340" r="16" /><circle cx="421" cy="440" r="16" /><circle cx="569" cy="573" r="15" />
          </g>
          <circle cx="296" cy="554" r="10" fill="#f4e080" />
        </g>
        <g font-family="Liberation Sans, sans-serif" font-size="16">
          <text x="1147" y="289" fill="#1c30d0">ZC</text>
          <text x="1277" y="404" fill="#107818">YC</text>
          <text x="1253" y="492" fill="#a81c1c">XC</text>
        </g>
        <g font-family="Liberation Sans, sans-serif" font-size="14">
          <path d="M439 797l18-6l16 5v25l-16 6l-18-6z" fill="#8c8c8c" stroke="#c4c4c4" />
          <path d="M439 797l18 7l16-8M457 804v23M439 821l17-7l17 7M457 791v23" fill="none" stroke="#bcbcbc" />
          <path d="M438 818v-27" stroke="#1c30d8" stroke-width="2" /><path d="M438 783l3 9h-6z" fill="#1c30d8" />
          <path d="M438 818l30-8" stroke="#a8d0a8" stroke-width="2" />
          <path d="M438 818l20 9" stroke="#e02020" stroke-width="3" /><path d="M464 832l-9-1l4-7z" fill="#e02020" />
          <circle cx="438" cy="818" r="4.5" fill="#ddd" />
          <text x="434" y="780" fill="#1c30d0">Z</text><text x="472" y="812" fill="#148020">Y</text><text x="464" y="840" fill="#b82018">X</text>
        </g>
      </svg>
    </section>

    <aside class="vbar v1">
      <i class="hgrip"></i>
      {@render vbar(side1)}
      <div class="vend"><i class="left"></i><b>»</b></div>
    </aside>
    <aside class="vbar v2">
      <i class="hgrip"></i>
      {@render vbar(side2)}
      <i class="left alone"></i>
      <i class="hsep"></i>
      <i class="hgrip"></i>
      {@render vbar(side3)}
      <i class="left alone"></i>
    </aside>
  </main>

  <footer>
    <div class="group b1"><i class="grip"></i>{@render bar(bot1)}</div>
    <div class="group b2"><i class="grip"></i>{@render bar(bot2)}</div>
    <div class="group b3"><i class="grip"></i>{@render bar(bot3)}{@render more()}</div>
  </footer>

  <section class="recorder">
    <header><h3>操作记录</h3><i class="tri"></i><button aria-label="关闭"><svg viewBox="0 0 16 16"><path d="M3 3l10 10M13 3L3 13" stroke="#fff" stroke-width="4" /></svg></button></header>
    <div>{@render bar(recorder)}</div>
  </section>

  <form class="dialog" bind:this={dialog} onsubmit={(e) => e.preventDefault()}>
    <header>
      <button type="button" aria-label="设置"><svg viewBox="0 0 20 20"><circle cx="10" cy="10" r="5.5" fill="none" stroke="#fff" stroke-width="3" /><path d="M10 1v4M10 15v4M1 10h4M15 10h4M4 4l2 2M14 14l2 2M16 4l-2 2M6 14l-2 2" stroke="#fff" stroke-width="3" /></svg></button>
      <h3>排气</h3>
      <button type="button" aria-label="重置"><svg viewBox="0 0 20 20"><path d="M10 3c7 1 8 12 0 13c-4 0-5-2-6-3" fill="none" stroke="#fff" stroke-width="3.4" /><path d="M3 17v-8l7 5z" fill="#fff" /></svg></button>
      <button type="button" aria-label="关闭"><svg viewBox="0 0 20 20"><path d="M4 4l12 12M16 4L4 16" stroke="#fff" stroke-width="4.4" /></svg></button>
    </header>
    <div class="body">
      <div class="modes">
        <button type="button" class="mode one"><span>单点<br />排气</span><i></i></button>
        <button type="button" class="mode many"><span>多点<br />排气</span><i></i><i></i><i></i></button>
      </div>
      <div class="pick"><div class="bar hot"><em>*</em>选择边 <span>(0)</span></div><button type="button" class="pb orange" aria-label="选择边">{@render ico('edgeB')}</button></div>
      <div class="pick"><div class="bar"><em>*</em>选择面 <span>(0)</span></div><button type="button" class="pb green" aria-label="选择面">{@render ico('faceB')}</button></div>
      <div class="pick"><div class="bar done">{@render ico('check', 16)}指定方位</div><button type="button" class="pb" aria-label="指定方位">{@render ico('axesB')}</button></div>
      <div class="fields">
        {#each fields as [id, label, value]}
          <label for={id}>{label}</label>
          <div class="num"><input {id} type="text" {value} /><span>mm</span><button type="button" aria-label={label}><svg viewBox="0 0 20 20"><path d="M7 3h6v6h5l-8 8l-8-8h5z" fill="#111" /></svg></button></div>
        {/each}
      </div>
      <label class="bool"><input type="checkbox" checked />{@render ico('boolB', 19)}布尔减</label>
      <div class="actions">
        <button type="button" disabled>确定</button><button type="button" disabled>应用</button><button type="button">取消</button>
      </div>
    </div>
  </form>

  <svg class="cursor" width="14" height="21" viewBox="0 0 14 21" aria-hidden="true"><path d="M1 1v16l4-4l3 7l3-1l-3-7h5z" fill="#fff" stroke="#222" /></svg>
</div>

<style>
  :global(body) { margin: 0; background: #000; }
  * { box-sizing: border-box; }
  button { padding: 0; border: 0; background: none; font: inherit; color: inherit; }
  ul { margin: 0; padding: 0; list-style: none; }
  h1, h2, h3 { margin: 0; }
  .defs { position: absolute; }
  .ico { display: block; flex: none; overflow: visible; }
  .window {
    position: relative; display: flex; flex-direction: column; min-height: 100vh; overflow: hidden;
    padding: 0 0 7px 7px; background: linear-gradient(90deg, #e8eef4 2px, #000 2px);
    font: 15px/20px "Liberation Sans", "Noto Sans CJK SC", sans-serif; color: #111;
  }
  .window::after { content: ""; position: absolute; left: 2px; right: 0; bottom: 2px; height: 3px; background: #4a524c; }
  .tri { display: block; flex: none; width: 0; height: 0; border: 4px solid transparent; border-top: 5px solid #111; border-bottom: 0; }
  .grip { flex: none; width: 3px; margin: 7px 3px; background: repeating-linear-gradient(#f8f8f8 0 2px, #a8a8a8 2px 3px, transparent 3px 5px); }

  .title {
    display: flex; align-items: flex-start; height: 35px; margin-left: -5px; padding: 3px 0 0 7px;
    background: linear-gradient(#666a70 0 4px, #4c5252 4px 9px, #000 9px); color: #fff;
  }
  .title h1 { flex: 1; margin: 3px 0 0 5px; font: 400 15px/20px "Noto Sans", "Noto Sans CJK SC", sans-serif; }
  .title strong { margin: 3px 35px 0 0; font: 800 17px/20px "Open Sans", sans-serif; }
  .winbtns { display: flex; gap: 4px; margin-right: -6px; }
  .winbtns button { width: 24px; height: 24px; border: 1px solid #888; border-radius: 4px; background: linear-gradient(#777, #333 50%, #666); }
  .winbtns .close { border-color: #f0a890; background: linear-gradient(#f07850, #d83010 50%, #f09060); }
  .winbtns svg, .mdi svg { display: block; width: 100%; height: 100%; }

  .menu { display: flex; align-items: center; height: 31px; padding-bottom: 1px; background: linear-gradient(#f2f2f2 16px, #d6d6d6 16px); }
  .menu .grip { align-self: stretch; margin-left: 5px; }
  .menu ul { display: flex; flex: 1; gap: 15px; margin-left: 8px; }
  .menu a { color: #111; text-decoration: none; white-space: nowrap; }
  .menu span { font: 13px/20px "Liberation Mono", monospace; }
  .mdi { display: flex; gap: 3px; margin-right: -2px; }
  .mdi button { width: 21px; height: 21px; border: 2px solid #999; border-radius: 4px; background: #f4f4f4; }

  .tools { display: flex; height: 46px; background: #d6d6d6; border-top: 1px solid #f8f8f8; border-bottom: 5px solid #aaa; }
  .group { position: relative; display: flex; align-items: stretch; border-right: 1px solid #f4f4f4; }
  .g1 { width: 642px; } .g2 { width: 421px; } .g3 { width: 560px; } .g4 { flex: 1; border: 0; }
  .cell { display: grid; place-items: center; flex: none; width: 39px; }
  .cell.on { border: 1px solid #777; border-radius: 4px; background: #f4f4f4; margin: 1px 0; }
  .drop { display: grid; place-items: center; flex: none; width: 15px; }
  .g2 .drop, .g3 .drop { width: 14px; }
  .drop.low { width: 14px; align-items: end; padding-bottom: 8px; }
  .g2 .sep { margin: 1px 2px; }
  .sep { flex: none; width: 1px; margin: 1px 3px; background: #f6f6f6; }
  .start, .find { display: flex; align-items: center; white-space: nowrap; }
  .start { gap: 4px; padding-left: 4px; }
  .start .tri { margin: 0 3px 0 1px; }
  .find { gap: 5px; padding: 0 5px 0 5px; }
  .more { display: flex; flex-direction: column; align-items: center; justify-content: space-between; width: 12px; margin-left: auto; margin-right: 5px; padding: 0 0 8px; }
  .more b { font-size: 16px; line-height: 16px; }
  .g4 .more, .b3 .more { margin-right: -2px; }

  .select-row { display: flex; align-items: flex-start; gap: 11px; height: 32px; padding: 3px 0 0 7px; background: #d6d6d6; border-bottom: 1px solid #fafafa; }
  .combo { position: relative; width: 138px; height: 21px; border: 2px solid #888; border-radius: 4px; background: #f4f4f4; }
  .combo.wide { width: 240px; }
  .combo select { display: block; width: 100%; height: 17px; padding: 0 2px; border: 0; background: none; appearance: none; font: 15px/17px "Noto Sans CJK SC", sans-serif; color: #111; }
  .combo .tri { position: absolute; top: 0; right: 0; width: 20px; height: 17px; border: 0; background: linear-gradient(#5c94e8, #a8e0ff); pointer-events: none; }
  .combo .tri::after { content: ""; position: absolute; left: 4px; top: 5px; border: 6px solid transparent; border-top: 8px solid #111; border-bottom: 0; }
  .snaps { display: flex; margin-left: 214px; height: 22px; }
  .snaps button { display: grid; place-items: center; width: 29px; }
  .snaps .sep { margin: 0 2px; }
  .cue { display: flex; height: 27px; background: #d6d6d6; border-bottom: 2px solid #999; }
  .cue .mid { margin: 0 0 0 878px; }
  .status { display: flex; align-items: center; margin-left: auto; margin-right: -5px; gap: 14px; }
  .status i { width: 1px; height: 25px; margin-right: 10px; background: #f6f6f6; }
  .status i:nth-child(3) { margin-right: -10px; margin-left: 18px; }

  main { display: flex; flex: 1; min-height: 0; }
  .tabs { display: flex; flex-direction: column; flex: none; width: 41px; padding: 22px 0 0 8px; background: #aaa; border-right: 1px solid #777; }
  .tab { display: grid; place-items: center; flex: none; height: 50px; margin-bottom: 2px; border: 2px solid #868686; border-right: 0; border-radius: 5px 0 0 5px; background: #d8d8d8; box-shadow: inset 1px 1px #f4f4f4; }
  .tab.active { height: 55px; margin: -2px -1px 1px -2px; border-color: #888; background: #f2f2f2; }
  .tab.gap { margin-top: 15px; }
  .tab.part { height: 30px; border-bottom: 0; }
  .pager { display: flex; flex-direction: column; gap: 2px; margin: 5px 10px 0 5px; }
  .pager button { height: 18px; border: 1px solid #777; border-color: #fff #777 #777 #fff; background: #e4e4e4; }
  .pager svg { display: block; width: 16px; height: 16px; }

  .panel { display: flex; flex-direction: column; flex: none; width: 328px; padding: 0 12px 6px; border-right: 2px solid #888; background: #f2f2f2; }
  .panel h2 { display: flex; align-items: center; gap: 16px; height: 39px; padding-left: 7px; font-size: 16px; line-height: 20px; }
  .tree { display: flex; flex-direction: column; flex: 1; border: 1px solid #777; }
  .head { display: flex; align-items: center; gap: 20px; height: 21px; padding-left: 8px; border-bottom: 1px solid #888; background: linear-gradient(#f2f2f2 60%, #d4d4e0 60%); }
  .head i { border: 6px solid transparent; border-bottom: 8px solid #111; border-top: 0; }
  .tree ul { flex: 1; }
  .tree li, .tree label { display: flex; align-items: center; gap: 4px; height: 25px; }
  .tree li { padding-left: 7px; }
  .tree li .none { width: 14px; }
  .tree span { font: 13px/20px "Liberation Mono", monospace; margin-left: 4px; }
  .tree .cam { margin-left: 0; }
  .exp { width: 11px; height: 11px; margin-right: 3px; border: 1px solid #888; border-radius: 2px; background: #fff; font: 11px/9px "Liberation Mono", monospace; }
  .tree .child { padding-left: 51px; }
  .child input { width: 15px; height: 15px; margin: 0; appearance: none; border: 2px solid #222; background: #fff; position: relative; }
  .child input::after { content: ""; position: absolute; left: 4px; top: -2px; width: 4px; height: 9px; border: solid #18c828; border-width: 0 3px 3px 0; transform: rotate(40deg); }
  .hscroll { display: flex; align-items: center; gap: 5px; height: 21px; padding: 0 6px 2px; }
  .hscroll i { width: 179px; height: 19px; background: #d4d4d4; }
  .hscroll button { width: 12px; font: 700 24px/16px "Liberation Sans", sans-serif; color: #666; padding-bottom: 4px; }
  .hscroll button:last-child { margin-left: auto; }
  .splitter { display: grid; place-items: center; height: 15px; background: linear-gradient(#f2f2f2 7px, #bbb 7px 8px, #f2f2f2 8px); }
  .splitter i { width: 54px; height: 7px; border: 1px solid #888; border-color: #fff #888 #888 #fff; background: #e4e4e4; }
  .section { display: flex; align-items: center; height: 28px; margin-bottom: 1px; padding-left: 8px; border: solid #888; border-width: 0 1px 1px 0; background: linear-gradient(#f2f2f2 18px, #d4d4dc 18px, #dadada); text-align: left; font-weight: 700; font-size: 16px; }
  .section span { flex: 1; }
  .section svg { width: 26px; height: 15px; border-left: 1px solid #aaa; }

  .canvas { flex: 1; min-width: 0; position: relative; background: #000; }
  .canvas svg { position: absolute; inset: 0; width: 100%; height: 100%; }

  .vbar { display: flex; flex-direction: column; flex: none; background: linear-gradient(#f2f2f2 167px, #d6d6d6 167px); }
  .v1 { width: 57px; border-right: 2px solid #f2f2f2; }
  .v2 { width: 51px; overflow: hidden; }
  .hgrip { flex: none; height: 3px; margin: 4px 7px 2px; background: repeating-linear-gradient(90deg, #999 0 3px, transparent 3px 5px); }
  .vcell { display: flex; align-items: center; justify-content: center; flex: none; height: 39px; gap: 10px; }
  .v2 .vcell { justify-content: flex-start; padding-left: 14px; }
  .v2 .vcell:has(.tri) { padding-left: 7px; }
  .hsep { flex: none; height: 1px; margin: 2px; background: #f8f8f8; }
  .left { border: 4px solid transparent; border-right: 5px solid #111; border-left: 0; width: 5px; }
  .left.alone { margin: 2px 0 3px 7px; }
  .vend { display: flex; justify-content: space-between; align-items: center; flex: 1; padding: 0 6px; }
  .vend b { font-size: 18px; line-height: 18px; transform: rotate(90deg); }

  footer { display: flex; height: 42px; background: linear-gradient(#f2f2f2 10px, #d6d6d6 10px); }
  .b1 { width: 680px; } .b2 { flex: 1; } .b3 { width: 118px; border: 0; }
  .b2 .cell { flex: 1; min-width: 0; }

  .recorder { position: absolute; top: 109px; right: 139px; width: 320px; border-radius: 6px 6px 4px 4px; overflow: hidden; background: #000; }
  .recorder header { display: flex; align-items: center; height: 27px; padding-left: 11px; color: #fff; background: linear-gradient(#6c7074 0 4px, #44484a 4px 11px, #000 11px); }
  .recorder h3 { flex: 1; font-size: 17px; line-height: 24px; }
  .recorder header .tri { border-top-color: #fff; border-width: 6px 5px 0; margin-right: 9px; }
  .recorder header button { width: 27px; height: 24px; padding: 4px 5px; border-left: 1px solid #999; }
  .recorder header svg { display: block; width: 16px; height: 16px; }
  .recorder > div { display: flex; height: 43px; padding: 0 4px 0 8px; background: linear-gradient(#f2f2f2 9px, #d6d6d6 9px); margin-bottom: 10px; border-bottom: 1px solid #566; }
  .recorder .cell { flex: 1; min-width: 0; }

  .dialog { position: absolute; left: 261px; top: 115px; width: 363px; padding-bottom: 9px; border-radius: 7px; background: #000; box-shadow: inset 0 -8px #000, inset 0 -10px #445; }
  .dialog > header { display: flex; align-items: stretch; height: 27px; border-radius: 7px 7px 0 0; color: #fff; background: linear-gradient(#72767a 0 4px, #3c4042 4px 10px, #000 10px); }
  .dialog > header button { width: 27px; padding: 3px; border-left: 1px solid #999; }
  .dialog > header button:first-child { border: 0; border-right: 1px solid #999; }
  .dialog > header svg { display: block; width: 19px; height: 20px; }
  .dialog h3 { flex: 1; padding-left: 12px; font-size: 17px; line-height: 25px; }
  .body { padding: 11px 12px 14px; border: solid #888; border-width: 0 2px 0 1px; background: #f2f2f2; }
  .modes { display: flex; gap: 6px; height: 76px; padding: 6px 5px 5px; border: solid #999; border-width: 2px 2px 0 2px; background: #d8d8d8; margin-bottom: 5px; }
  .mode { position: relative; display: flex; align-items: flex-start; width: 145px; height: 63px; padding: 8px 0 0 14px; gap: 12px; border-radius: 5px; border: 2px solid #888; font-size: 16px; line-height: 20px; }
  .mode span { width: 50px; height: 42px; margin-right: 1px; padding-top: 1px; background: #e4dc7c; text-align: center; }
  .mode i { width: 8px; height: 45px; background: linear-gradient(#f0b010 2px, #2c3cd0 2px 15px, #6c6c70 15px); }
  .one { border-top-color: #f07820; border-left-color: #d87838; background: linear-gradient(#fde8cc 0 16%, #fcc898 16% 36%, #f8a868 36% 50%, #ff9040 50% 64%, #e8b070 64% 80%, #fcc890 80%); color: #666; }
  .one span { color: #777068; }
  .one i { width: 13px; margin-left: 20px; opacity: .8; }
  .many { border-color: #2c78d0 #789 #889 #2c78d0; background: linear-gradient(#dce8f4 0 22%, #a8c8f8 22% 48%, #48a8e8 48% 58%, #68d8f8 58%); }
  .pick { display: flex; align-items: center; justify-content: space-between; height: 38px; margin-bottom: 5px; }
  .bar { display: flex; align-items: center; width: 295px; height: 38px; margin-left: -1px; padding-left: 8px; border-radius: 8px; white-space: pre; }
  .bar em { width: 17px; font: 700 24px/20px "Liberation Sans", sans-serif; color: #e02018; padding: 6px 0 0 0; }
  .bar span { font: 15px/20px "Liberation Sans", sans-serif; margin-left: 6px; }
  .bar.done { padding-left: 2px; gap: 7px; }
  .hot { background: linear-gradient(90deg, #e4a468 0 32%, #e0ac80 32% 62%, #d8b4a4 62% 66%, #d8c4a8 66% 86%, #d8d8d8 86%); }
  .pb { display: grid; place-items: center; width: 38px; height: 38px; border: 2px solid #888; border-radius: 5px; background: linear-gradient(#f8f8f8 40%, #d4d4d4 40%, #f4f4f4 70%); }
  .orange { border-top-color: #e87020; background: linear-gradient(#fdf0e0, #fcc8a0 48%, #ff9850 50%, #fcc898); }
  .green { border-top-color: #187018; background: linear-gradient(#f0f8f0, #b4dcb0 48%, #80d070 50%, #b0e8a0); }
  .fields { display: grid; grid-template-columns: 1fr 133px; row-gap: 3px; align-items: center; margin: -1px 0 6px -1px; }
  .num { display: flex; align-items: stretch; height: 24px; border: 2px solid #888; border-radius: 4px; background: #f6f6f6; overflow: hidden; }
  .num input { flex: 1; min-width: 0; width: 60px; padding: 0 0 2px 2px; border: 0; outline: 0; background: none; font: 13px/16px "Liberation Mono", monospace; color: #333; }
  .num input::selection { background: #0078d7; color: #fff; }
  .num span { width: 40px; font: 13px/22px "Liberation Mono", monospace; }
  .num button { width: 20px; border-left: 1px solid #668; background: linear-gradient(#4888e0, #a0d8ff); }
  .num button svg { display: block; width: 19px; height: 19px; }
  .bool { display: flex; align-items: center; gap: 3px; height: 21px; margin-bottom: 9px; }
  .bool input { width: 20px; height: 20px; margin: 0 4px 0 0; appearance: none; border: 2px solid #777; border-radius: 3px; background: linear-gradient(#e8f0ff 30%, #48a8e8 60%, #78e0ff); position: relative; }
  .bool input::after { content: ""; position: absolute; left: 5px; top: -1px; width: 5px; height: 11px; border: solid #142c80; border-width: 0 4px 4px 0; transform: rotate(40deg); }
  .actions { display: flex; justify-content: flex-end; gap: 8px; padding: 7px 9px 0 0; border-top: 1px solid #bbb; }
  .actions button { width: 66px; height: 23px; border: 2px solid #777; border-radius: 5px; background: linear-gradient(#f8f8f8 30%, #cdd0d8 30% 60%, #f4f4f4 60%); line-height: 18px; }
  .actions button:disabled { border-color: #aaa; background: #f2f2f2; color: #aaa; }
  .cursor { position: absolute; left: 524px; top: 214px; }
</style>
